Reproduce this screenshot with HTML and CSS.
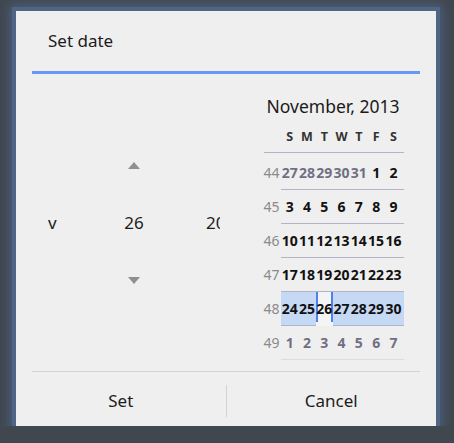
FILE: index.html
```html
<!DOCTYPE html>
<html lang="en">
<head>
    <meta charset="UTF-8">
    <meta name="viewport" content="width=device-width, initial-scale=1.0">
    <title>Set date</title>
    <link rel="stylesheet" href="styles.css">
</head>
<body>

    <div class="dialog">
        <div class="dialog-title">Set date</div>
        <div class="title-line"></div>

        <div class="dialog-body">
            <div class="spinner-panel">
                <div class="spinners">
                    <div class="spin-col month">v</div>
                    <div class="spin-col day">
                        <span class="arrow up"></span>
                        <span class="spin-value">26</span>
                        <span class="arrow down"></span>
                    </div>
                    <div class="spin-col year">2013</div>
                </div>
            </div>

            <div class="calendar">
                <div class="month-name">November, 2013</div>
                <div class="cal-row cal-head">
                    <span></span>
                    <span>S</span><span>M</span><span>T</span><span>W</span><span>T</span><span>F</span><span>S</span>
                </div>
                <div class="cal-row">
                    <span class="week">44</span>
                    <span class="other">27</span><span class="other">28</span><span class="other">29</span><span class="other">30</span><span class="other">31</span><span>1</span><span>2</span>
                </div>
                <div class="cal-row">
                    <span class="week">45</span>
                    <span>3</span><span>4</span><span>5</span><span>6</span><span>7</span><span>8</span><span>9</span>
                </div>
                <div class="cal-row">
                    <span class="week">46</span>
                    <span>10</span><span>11</span><span>12</span><span>13</span><span>14</span><span>15</span><span>16</span>
                </div>
                <div class="cal-row">
                    <span class="week">47</span>
                    <span>17</span><span>18</span><span>19</span><span>20</span><span>21</span><span>22</span><span>23</span>
                </div>
                <div class="cal-row selected-week">
                    <span class="week">48</span>
                    <span>24</span><span>25</span><span class="selected-day">26</span><span>27</span><span>28</span><span>29</span><span>30</span>
                </div>
                <div class="cal-row last">
                    <span class="week">49</span>
                    <span class="other">1</span><span class="other">2</span><span class="other">3</span><span class="other">4</span><span class="other">5</span><span class="other">6</span><span class="other">7</span>
                </div>
            </div>
        </div>

        <div class="bottom-line"></div>
        <div class="buttons">
            <button type="button">Set</button>
            <button type="button" class="cancel">Cancel</button>
        </div>
    </div>

</body>
</html>
```

FILE: styles.css
```css
body {
    margin: 0;
    padding: 11px 0 0 16px;
    background-color: #40474f;
    font-family: "Noto Sans", "Open Sans", sans-serif;
    color: #1c1c1c;
}
.dialog {
    width: 420px;
    height: 415px;
    background-color: #efefef;
    box-shadow: 0 0 0 4px #506585, 0 0 10px 7px #4b5d79;
    display: flex;
    flex-direction: column;
}
.dialog-title {
    height: 60px;
    line-height: 60px;
    padding-left: 32px;
    font-size: 17px;
}
.title-line {
    height: 3px;
    margin: 0 16px;
    background-color: #6699f6;
}
.dialog-body {
    height: 297px;
    display: flex;
    padding: 0 32px 0 16px;
}
.spinner-panel {
    flex: 1;
}
.spinners {
    width: 172px;
    margin: 88px 0 0 16px;
    display: flex;
    align-items: center;
    overflow: hidden;
    font-size: 17px;
    line-height: 24px;
}
.spin-col {
    width: 57px;
    white-space: nowrap;
    overflow: hidden;
}
.spin-col.day {
    width: 58px;
    display: flex;
    flex-direction: column;
    align-items: center;
}
.spin-col.year {
    padding-left: 43px;
    box-sizing: border-box;
}
.spin-value {
    margin: 42px 0;
}
.arrow {
    width: 0;
    height: 0;
    border-left: 6.5px solid transparent;
    border-right: 6.5px solid transparent;
}
.arrow.up {
    border-bottom: 7px solid #8f8f8f;
}
.arrow.down {
    border-top: 7px solid #8f8f8f;
}
.calendar {
    width: 142px;
    padding-top: 22px;
}
.month-name {
    font-size: 17.5px;
    line-height: 20px;
    text-align: center;
    white-space: nowrap;
    margin: 0 -4px;
    color: #1a1a1a;
}
.cal-row {
    display: grid;
    grid-template-columns: 19px repeat(7, 17.3px);
    padding-right: 2px;
    height: 34px;
    line-height: 33px;
    background: linear-gradient(#b3b3c3, #b3b3c3) right bottom / 123px 1px no-repeat;
    font-size: 14px;
    font-weight: bold;
    text-align: center;
    color: #111;
}
.cal-head {
    height: 37px;
    line-height: 26px;
    padding-top: 8px;
    box-sizing: border-box;
    background-size: 140px 1px;
    font-size: 12.5px;
    color: #333;
    margin-bottom: 3px;
}
.cal-row .week {
    font-weight: normal;
    color: #8a8a8a;
}
.cal-row .other {
    color: #6f6f84;
}
.selected-week {
    background:
        linear-gradient(#a9b6cc, #a9b6cc) right bottom / 123px 1px no-repeat,
        linear-gradient(#c5d8f4, #c5d8f4) right top / 123px 100% no-repeat;
}
.selected-day {
    background:
        linear-gradient(#4f7ff0, #4f7ff0) left top / 2px 30px no-repeat,
        linear-gradient(#4f7ff0, #4f7ff0) right top / 2px 30px no-repeat,
        #f4f4f4;
}
.cal-row.last {
    background-image: linear-gradient(#dcdcdc, #dcdcdc);
}
.bottom-line {
    height: 1px;
    margin: 0 16px;
    background-color: #d3d3d3;
}
.buttons {
    display: flex;
    height: 54px;
    align-items: flex-start;
}
button {
    flex: 1;
    margin-top: 13px;
    height: 32px;
    line-height: 32px;
    padding: 0;
    border: none;
    background: none;
    font-family: "Noto Sans", "Open Sans", sans-serif;
    font-size: 17px;
    color: #1c1c1c;
}
button.cancel {
    border-left: 1px solid #d3d3d3;
}
```
